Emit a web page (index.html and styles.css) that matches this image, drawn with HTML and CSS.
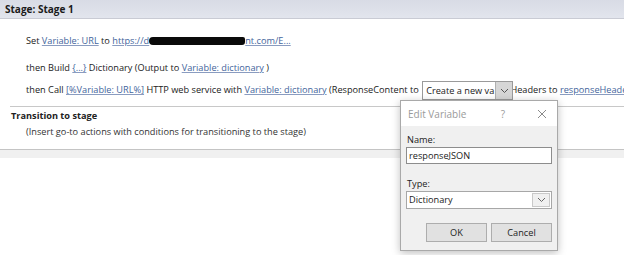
FILE: index.html
```html
<!DOCTYPE html>
<html lang="en">
<head>
    <meta charset="UTF-8">
    <meta name="viewport" content="width=device-width, initial-scale=1.0">
    <title>Stage: Stage 1</title>
    <link rel="stylesheet" href="styles.css">
</head>
<body>
    <div class="stage">
        <div class="stage-header">Stage: Stage 1</div>

        <div class="actions">
            <div class="action action-first">
                Set <a class="token">Variable: URL</a> to <a class="token">https://d<span class="redacted"></span>nt.com/E...</a>
            </div>
            <div class="action">
                then Build <a class="token">{...}</a> Dictionary (Output to <a class="token">Variable: dictionary</a> )
            </div>
            <div class="action">
                then Call <a class="token">[%Variable: URL%]</a> HTTP web service with <a class="token">Variable: dictionary</a> (ResponseContent to
                <span class="combo">
                    <span class="combo-text">Create a new va</span>
                    <span class="combo-btn">
                        <svg width="9" height="6" viewBox="0 0 9 6"><path d="M1 1 L4.5 4.5 L8 1" fill="none" stroke="#555" stroke-width="1"/></svg>
                    </span>
                </span><span class="covered">H</span>eaders to <a class="token">responseHeaders</a>
            </div>
        </div>

        <div class="transition">
            <div class="transition-title">Transition to stage</div>
            <div class="transition-hint">(Insert go-to actions with conditions for transitioning to the stage)</div>
        </div>
    </div>
    <div class="band"></div>

    <div class="dialog">
        <div class="dialog-title">
            <span class="dialog-name">Edit Variable</span>
            <span class="dialog-help">?</span>
            <span class="dialog-close">
                <svg width="10" height="10" viewBox="0 0 10 10"><path d="M1 1 L9 9 M9 1 L1 9" stroke="#8a8a8a" stroke-width="1"/></svg>
            </span>
        </div>
        <div class="dialog-body">
            <label class="field-label">Name:</label>
            <div class="text-input">responseJSON</div>

            <label class="field-label field-type">Type:</label>
            <div class="select">
                <span class="select-text">Dictionary</span>
                <span class="select-btn">
                    <svg width="9" height="6" viewBox="0 0 9 6"><path d="M1 1 L4.5 4.5 L8 1" fill="none" stroke="#666" stroke-width="1"/></svg>
                </span>
            </div>

            <div class="dialog-buttons">
                <button class="btn">OK</button>
                <button class="btn">Cancel</button>
            </div>
        </div>
    </div>
</body>
</html>
```

FILE: styles.css
```css
body {
    font-family: 'Segoe UI', 'Open Sans', 'Noto Sans', sans-serif;
    font-size: 9.2px;
    color: #222222;
    background-color: #ffffff;
    margin: 0;
    overflow: hidden;
}
.stage {
    border-bottom: 1px solid #c4c4c4;
    box-shadow: 0 1px 1px rgba(0,0,0,0.08);
}
.stage-header {
    height: 18px;
    line-height: 18px;
    padding-left: 5px;
    font-weight: bold;
    font-size: 10px;
    color: #1a1a1a;
    background: linear-gradient(#d8dbe5, #e2e5ed);
    border-bottom: 1px solid #c9cbd4;
}
.actions {
    padding-left: 26px;
    white-space: nowrap;
}
.action {
    height: 22px;
    line-height: 22px;
}
.action-first {
    margin-top: 11px;
    margin-bottom: 5px;
}
.token {
    color: #44659c;
    text-decoration: underline;
    text-decoration-color: #8a9cc0;
}
.redacted {
    display: inline-block;
    width: 96px;
    height: 8px;
    background-color: #0a0a0a;
    border-radius: 4px 2px 3px 4px;
    vertical-align: -1px;
}
.combo {
    display: inline-flex;
    align-items: stretch;
    height: 17px;
    border: 1px solid #9a9a9a;
    background-color: #ffffff;
    vertical-align: middle;
    margin-left: 1px;
    position: relative;
    z-index: 2;
}
.combo-text {
    line-height: 17px;
    padding-left: 3px;
    width: 69px;
    overflow: hidden;
    color: #1a1a1a;
}
.combo-btn {
    width: 16px;
    background-color: #d6d6d6;
    border-left: 1px solid #b0b0b0;
    display: flex;
    align-items: center;
    justify-content: center;
}
.covered {
    display: inline-block;
    width: 4px;
    overflow: hidden;
    vertical-align: top;
    direction: rtl;
}
.transition {
    margin-left: 10px;
    margin-top: 5px;
    border-top: 1px solid #c8c8c8;
    padding-top: 1px;
    padding-bottom: 9px;
}
.transition-title {
    font-weight: bold;
    line-height: 16px;
    padding-left: 1px;
}
.transition-hint {
    padding-left: 16px;
    line-height: 16px;
    color: #333333;
}
.band {
    height: 8px;
    background-color: #f0f0f0;
}
.dialog {
    position: absolute;
    left: 400px;
    top: 100px;
    width: 156px;
    border: 1px solid #a9a9a9;
    background-color: #f0f0f0;
    box-shadow: 0 2px 8px rgba(0,0,0,0.25);
    z-index: 3;
}
.dialog-title {
    height: 25px;
    display: flex;
    align-items: center;
    background-color: #ffffff;
    color: #9a9a9a;
    font-size: 10px;
}
.dialog-name {
    padding-left: 7px;
    flex: 1;
}
.dialog-help {
    width: 30px;
    text-align: center;
    margin-right: 9px;
}
.dialog-close {
    width: 30px;
    display: flex;
    justify-content: center;
}
.dialog-body {
    padding: 7px 5px 8px 5px;
}
.field-label {
    display: block;
    line-height: 14px;
    padding-left: 1px;
}
.field-type {
    margin-top: 13px;
}
.text-input {
    height: 15px;
    line-height: 15px;
    border: 1px solid #8d8d8d;
    background-color: #ffffff;
    padding-left: 2px;
}
.select {
    display: flex;
    height: 16px;
    border: 1px solid #a7a7a7;
    background-color: #ffffff;
}
.select-text {
    flex: 1;
    line-height: 16px;
    padding-left: 2px;
}
.select-btn {
    width: 16px;
    margin: 1px;
    border: 1px solid #c9c9c9;
    background-color: #f0f0f0;
    display: flex;
    align-items: center;
    justify-content: center;
}
.dialog-buttons {
    display: flex;
    justify-content: flex-end;
    gap: 4px;
    margin-top: 14px;
}
.btn {
    width: 61px;
    height: 19px;
    padding: 0;
    font-family: inherit;
    font-size: 9.2px;
    color: #222222;
    background-color: #e1e1e1;
    border: 1px solid #adadad;
}
```
